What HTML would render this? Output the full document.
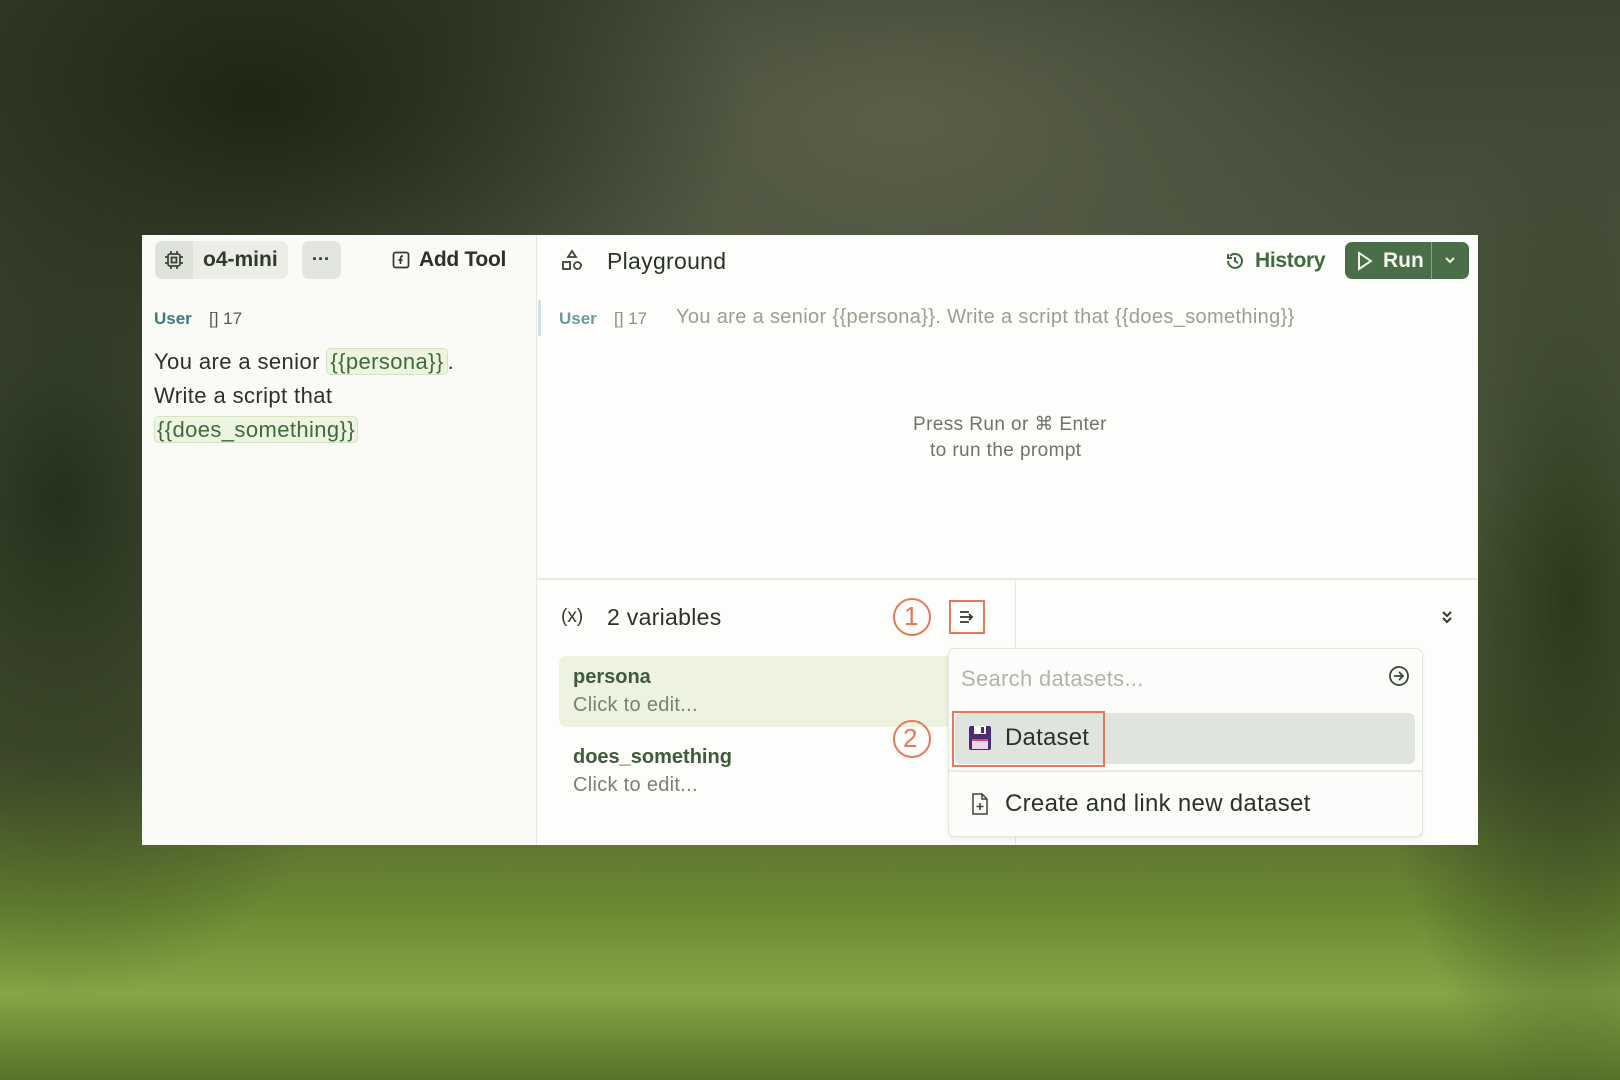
<!DOCTYPE html>
<html><head><meta charset="utf-8"><style>
*{margin:0;padding:0;box-sizing:border-box}
body{width:1620px;height:1080px;overflow:hidden;position:relative;font-family:"Liberation Sans",sans-serif;
background:
radial-gradient(ellipse 350px 500px at 60px 500px,#25301a 0%,rgba(37,48,26,0) 100%),
radial-gradient(ellipse 500px 300px at 250px 100px,#1d2612 0%,rgba(29,38,18,0) 100%),
radial-gradient(ellipse 200px 500px at 1570px 600px,#2c3a1c 0%,rgba(44,58,28,0) 100%),
radial-gradient(ellipse 500px 250px at 900px 120px,#5a5f48 0%,rgba(90,95,72,0) 100%),
linear-gradient(180deg,#3a4230 0%,#4d5540 25%,#5e6650 45%,#4f5b35 70%,#6a8a32 84%,#85a645 92%,#55722a 100%);}
.a{position:absolute}
.panel{left:142px;top:235px;width:1336px;height:610px;background:#fafaf6}
.right{left:536px;top:235px;width:942px;height:610px;background:#fdfdfb}
.t{position:absolute;white-space:nowrap;color:#2a3326}
.chip{background:#eef4e2;border:1px solid #d6e3c2;border-radius:5px;color:#3f6a3c;padding:0 3px}
.g{color:#9aa08f}
</style></head><body>
<div class="a panel"></div>
<div class="a right"></div>
<div class="a" style="left:536px;top:235px;width:1px;height:610px;background:#e6e6e0"></div>
<div class="a" style="left:155px;top:241px;width:133px;height:38px;background:#ebede6;border-radius:7px"></div>
<div class="a" style="left:155px;top:241px;width:38px;height:38px;background:#dfe2da;border-radius:7px 0 0 7px"></div>
<svg class="a" style="left:164px;top:250px" width="20" height="20" viewBox="0 0 20 20" fill="none" stroke="#3b4636" stroke-width="1.8"><rect x="4" y="4" width="12" height="12" rx="2"/><rect x="7.5" y="7.5" width="5" height="5"/><path d="M7 1v3M13 1v3M7 16v3M13 16v3M1 7h3M1 13h3M16 7h3M16 13h3"/></svg>
<div class="t" style="left:203px;top:248px;font-size:21px;font-weight:bold;color:#2f3a2c">o4-mini</div>
<div class="a" style="left:302px;top:241px;width:39px;height:38px;background:#e2e5de;border-radius:7px"></div>
<div class="t" style="left:312px;top:249px;font-size:18px;font-weight:bold">···</div>
<svg class="a" style="left:392px;top:251px" width="18" height="18" viewBox="0 0 18 18" fill="none" stroke="#2f3a2c" stroke-width="1.7"><rect x="1.5" y="1.5" width="15" height="15" rx="2"/><path d="M11 5c-2 0-2.5 1-2.5 3v5M6.5 9h4"/></svg>
<div class="t" style="left:419px;top:248px;font-size:21px;font-weight:bold;letter-spacing:-0.3px">Add Tool</div>
<svg class="a" style="left:560px;top:249px" width="24" height="24" viewBox="0 0 24 24" fill="none" stroke="#3b4636" stroke-width="1.8"><path d="M12 2l4 6H8z"/><rect x="3" y="13" width="7" height="7"/><circle cx="17.5" cy="16.5" r="3.5"/></svg>
<div class="t" style="left:607px;top:248px;font-size:23px;color:#2a3326;letter-spacing:0.3px">Playground</div>
<svg class="a" style="left:1225px;top:251px" width="20" height="20" viewBox="0 0 20 20" fill="none" stroke="#3f6a3c" stroke-width="2"><path d="M3 10a7 7 0 1 0 2-5M3 3v4h4M10 6v4l3 2"/></svg>
<div class="t" style="left:1255px;top:249px;font-size:21px;font-weight:bold;color:#3f6a3c;letter-spacing:-0.3px">History</div>
<div class="a" style="left:1345px;top:242px;width:124px;height:37px;background:#4a6e47;border-radius:7px"></div>
<div class="a" style="left:1431px;top:242px;width:1px;height:37px;background:#8aa386"></div>
<svg class="a" style="left:1356px;top:251px" width="18" height="20" viewBox="0 0 18 20" fill="none" stroke="#f1f4e8" stroke-width="2"><path d="M3 2l12 8-12 8z"/></svg>
<div class="t" style="left:1383px;top:249px;font-size:21px;font-weight:bold;color:#f6f7ee">Run</div>
<svg class="a" style="left:1443px;top:254px" width="14" height="12" viewBox="0 0 14 12" fill="none" stroke="#f1f4e8" stroke-width="2"><path d="M3 4l4 4 4-4"/></svg>
<div class="t" style="left:154px;top:309px;font-size:17px;font-weight:bold;color:#3e7a83">User</div>
<div class="t" style="left:209px;top:309px;font-size:17px;color:#555">[] 17</div>
<div class="a" style="left:538px;top:300px;width:3px;height:36px;background:#cfe3e6"></div>
<div class="t" style="left:559px;top:309px;font-size:17px;font-weight:bold;color:#6b9aa2">User</div>
<div class="t" style="left:614px;top:309px;font-size:17px;color:#8a8f84">[] 17</div>
<div class="t g" style="left:676px;top:306px;font-size:20px;letter-spacing:0.35px">You are a senior {{persona}}. Write a script that {{does_something}}</div>
<div class="t" style="left:154px;top:345px;font-size:22px;line-height:34px;letter-spacing:0.4px">You are a senior <span class="chip">{{persona}}</span>.<br>Write a script that<br><span class="chip" style="padding:0 2px">{{does_something}}</span></div>
<div class="t" style="left:913px;top:413px;font-size:19px;color:#6e7566;letter-spacing:0.4px">Press Run or ⌘ Enter</div>
<div class="t" style="left:930px;top:440px;font-size:19px;color:#6e7566;letter-spacing:0.4px">to run the prompt</div>
<div class="a" style="left:536px;top:578px;width:942px;height:2px;background:#e8e9e3"></div>
<div class="a" style="left:1015px;top:579px;width:1px;height:266px;background:#e8e9e3"></div>
<div class="t" style="left:561px;top:606px;font-size:19px;color:#2f3a2c">(x)</div>
<div class="t" style="left:607px;top:604px;font-size:23px;letter-spacing:0.3px">2 variables</div>
<div class="a" style="left:893px;top:598px;width:38px;height:38px;border:2.5px solid #e57a5a;border-radius:50%"></div>
<div class="t" style="left:904px;top:601px;font-size:26px;color:#e57a5a">1</div>
<div class="a" style="left:949px;top:600px;width:36px;height:34px;border:2.5px solid #e57a5a"></div>
<svg class="a" style="left:958px;top:608px" width="18" height="18" viewBox="0 0 18 18" fill="none" stroke="#2f3a2c" stroke-width="1.8"><path d="M2 4h9M2 9h7M2 14h9M11 6l3 3-3 3M9 9h5"/></svg>
<svg class="a" style="left:1440px;top:608px" width="14" height="18" viewBox="0 0 14 18" fill="none" stroke="#2f3a2c" stroke-width="2"><path d="M3 4l4 4 4-4M3 10l4 4 4-4"/></svg>
<div class="a" style="left:559px;top:656px;width:400px;height:71px;background:#eef3df;border-radius:8px"></div>
<div class="t" style="left:573px;top:666px;font-size:20px;font-weight:bold;color:#3f5a3c">persona</div>
<div class="t" style="left:573px;top:694px;font-size:20px;color:#7a8072;letter-spacing:0.3px">Click to edit...</div>
<div class="t" style="left:573px;top:746px;font-size:20px;font-weight:bold;color:#3f5a3c">does_something</div>
<div class="t" style="left:573px;top:774px;font-size:20px;color:#7a8072;letter-spacing:0.3px">Click to edit...</div>
<div class="a" style="left:948px;top:648px;width:475px;height:189px;background:#fcfcfa;border:1px solid #e3e5df;border-radius:7px;box-shadow:0 2px 5px rgba(0,0,0,.08)"></div>
<div class="t" style="left:961px;top:666px;font-size:22px;color:#b0b4aa;letter-spacing:0.3px">Search datasets...</div>
<svg class="a" style="left:1388px;top:665px" width="22" height="22" viewBox="0 0 22 22" fill="none" stroke="#3b4636" stroke-width="1.8"><circle cx="11" cy="11" r="9"/><path d="M6 11h9M11 7l4 4-4 4"/></svg>
<div class="a" style="left:955px;top:713px;width:460px;height:51px;background:#e0e4df;border-radius:6px"></div>
<div class="a" style="left:952px;top:711px;width:153px;height:56px;border:2.5px solid #e57a5a"></div>
<svg class="a" style="left:968px;top:725px" width="24" height="26" viewBox="0 0 24 26"><rect x="1" y="1" width="22" height="24" rx="2" fill="#4b2c7a"/><rect x="6" y="1" width="12" height="8" fill="#fff"/><rect x="13" y="2" width="3" height="6" fill="#4b2c7a"/><rect x="4" y="14" width="16" height="10" fill="#e8d8ef"/><rect x="4" y="14" width="16" height="2" fill="#e0455a"/></svg>
<div class="t" style="left:1005px;top:724px;font-size:24px;letter-spacing:0.2px">Dataset</div>
<div class="a" style="left:893px;top:720px;width:38px;height:38px;border:2.5px solid #e57a5a;border-radius:50%"></div>
<div class="t" style="left:903px;top:723px;font-size:26px;color:#e57a5a">2</div>
<div class="a" style="left:949px;top:770px;width:473px;height:2px;background:#e8e9e3"></div>
<svg class="a" style="left:971px;top:793px" width="18" height="22" viewBox="0 0 18 22" fill="none" stroke="#3b4636" stroke-width="1.5"><path d="M2 1h9l5 5v15H2zM11 1v5h5M9 10v7M5.5 13.5h7"/></svg>
<div class="t" style="left:1005px;top:790px;font-size:24px;letter-spacing:0.3px">Create and link new dataset</div>
</body></html>
